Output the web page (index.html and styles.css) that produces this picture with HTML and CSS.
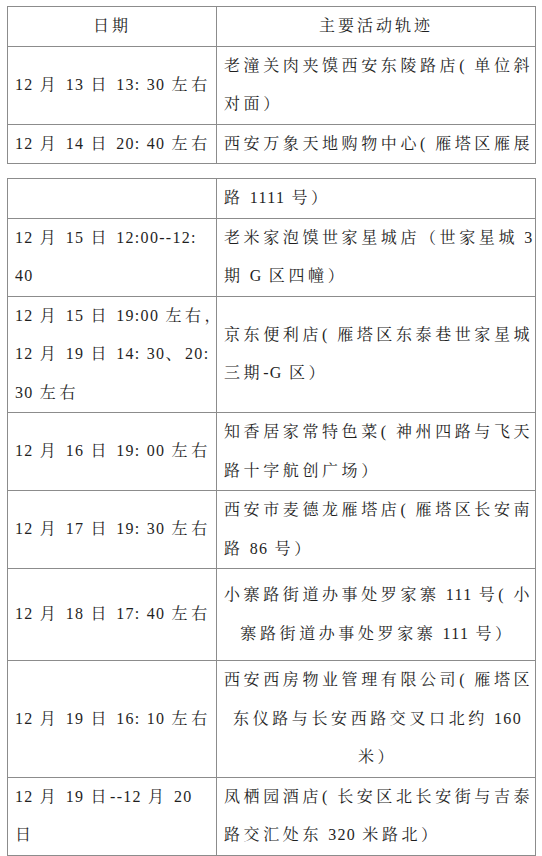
FILE: index.html
```html
<!DOCTYPE html>
<html lang="zh-CN">
<head>
<meta charset="utf-8">
<title>主要活动轨迹</title>
<link rel="stylesheet" href="styles.css">
</head>
<body>
<div class="page">
  <table class="tbl">
    <colgroup><col class="col-date"><col class="col-place"></colgroup>
    <tr class="head"><th>日期</th><th>主要活动轨迹</th></tr>
    <tr>
      <td><span class="n">12</span> 月 <span class="n">13</span> 日 <span class="n">13:</span> <span class="n">30</span> 左右</td>
      <td>老潼关肉夹馍西安东陵路店( 单位斜<br>对面）</td>
    </tr>
    <tr>
      <td><span class="n">12</span> 月 <span class="n">14</span> 日 <span class="n">20:</span> <span class="n">40</span> 左右</td>
      <td>西安万象天地购物中心( 雁塔区雁展</td>
    </tr>
  </table>

  <table class="tbl">
    <colgroup><col class="col-date"><col class="col-place"></colgroup>
    <tr>
      <td></td>
      <td>路 <span class="n">1111</span> 号）</td>
    </tr>
    <tr>
      <td><span class="n">12</span> 月 <span class="n">15</span> 日 <span class="n">12:00--12:</span><br><span class="n">40</span></td>
      <td>老米家泡馍世家星城店（世家星城 <span class="n">3</span><br>期 <span class="n">G</span> 区四幢）</td>
    </tr>
    <tr>
      <td><span class="n">12</span> 月 <span class="n">15</span> 日 <span class="n">19:00</span> 左右，<br><span class="n">12</span> 月 <span class="n">19</span> 日 <span class="n">14:</span> <span class="n">30</span>、<span class="n">20:</span><br><span class="n">30</span> 左右</td>
      <td>京东便利店( 雁塔区东泰巷世家星城<br>三期<span class="n">-G</span> 区）</td>
    </tr>
    <tr>
      <td><span class="n">12</span> 月 <span class="n">16</span> 日 <span class="n">19:</span> <span class="n">00</span> 左右</td>
      <td>知香居家常特色菜( 神州四路与飞天<br>路十字航创广场）</td>
    </tr>
    <tr>
      <td><span class="n">12</span> 月 <span class="n">17</span> 日 <span class="n">19:</span> <span class="n">30</span> 左右</td>
      <td>西安市麦德龙雁塔店( 雁塔区长安南<br>路 <span class="n">86</span> 号）</td>
    </tr>
    <tr class="tall">
      <td><span class="n">12</span> 月 <span class="n">18</span> 日 <span class="n">17:</span> <span class="n">40</span> 左右</td>
      <td class="center">小寨路街道办事处罗家寨 <span class="n">111</span> 号( 小<br>寨路街道办事处罗家寨 <span class="n">111</span> 号）</td>
    </tr>
    <tr>
      <td><span class="n">12</span> 月 <span class="n">19</span> 日 <span class="n">16:</span> <span class="n">10</span> 左右</td>
      <td class="center">西安西房物业管理有限公司( 雁塔区<br>东仪路与长安西路交叉口北约 <span class="n">160</span><br>米）</td>
    </tr>
    <tr>
      <td><span class="n">12</span> 月 <span class="n">19</span> 日<span class="n">--12</span> 月 <span class="n">20</span><br>日</td>
      <td>凤栖园酒店( 长安区北长安街与吉泰<br>路交汇处东 <span class="n">320</span> 米路北）</td>
    </tr>
  </table>
</div>
</body>
</html>
```

FILE: styles.css
```css
html, body {
  margin: 0;
  padding: 0;
  background: #ffffff;
}

.page {
  padding: 6px 0 0 7px;
  display: flex;
  flex-direction: column;
  gap: 14px;
}

.tbl {
  border-collapse: collapse;
  table-layout: fixed;
  width: 528px;
  font-family: "Liberation Serif", "Noto Serif CJK SC", "Noto Sans CJK SC", serif;
  font-size: 16px;
  color: #1f1f1f;
  letter-spacing: 3.6px;
  word-spacing: -1.4px;
  line-height: 38.5px;
}

.col-date { width: 209px; }
.col-place { width: 319px; }

.tbl th,
.tbl td {
  border: 1px solid #8c8c8c;
  padding: 0 4px 0 7px;
  vertical-align: middle;
  white-space: nowrap;
  text-align: left;
  font-weight: normal;
}

.tbl .head th {
  text-align: center;
  letter-spacing: 3px;
  padding: 0;
}

.tbl td.center {
  text-align: center;
}

.tall { height: 92px; }

.n {
  letter-spacing: 1.3px;
}
```
